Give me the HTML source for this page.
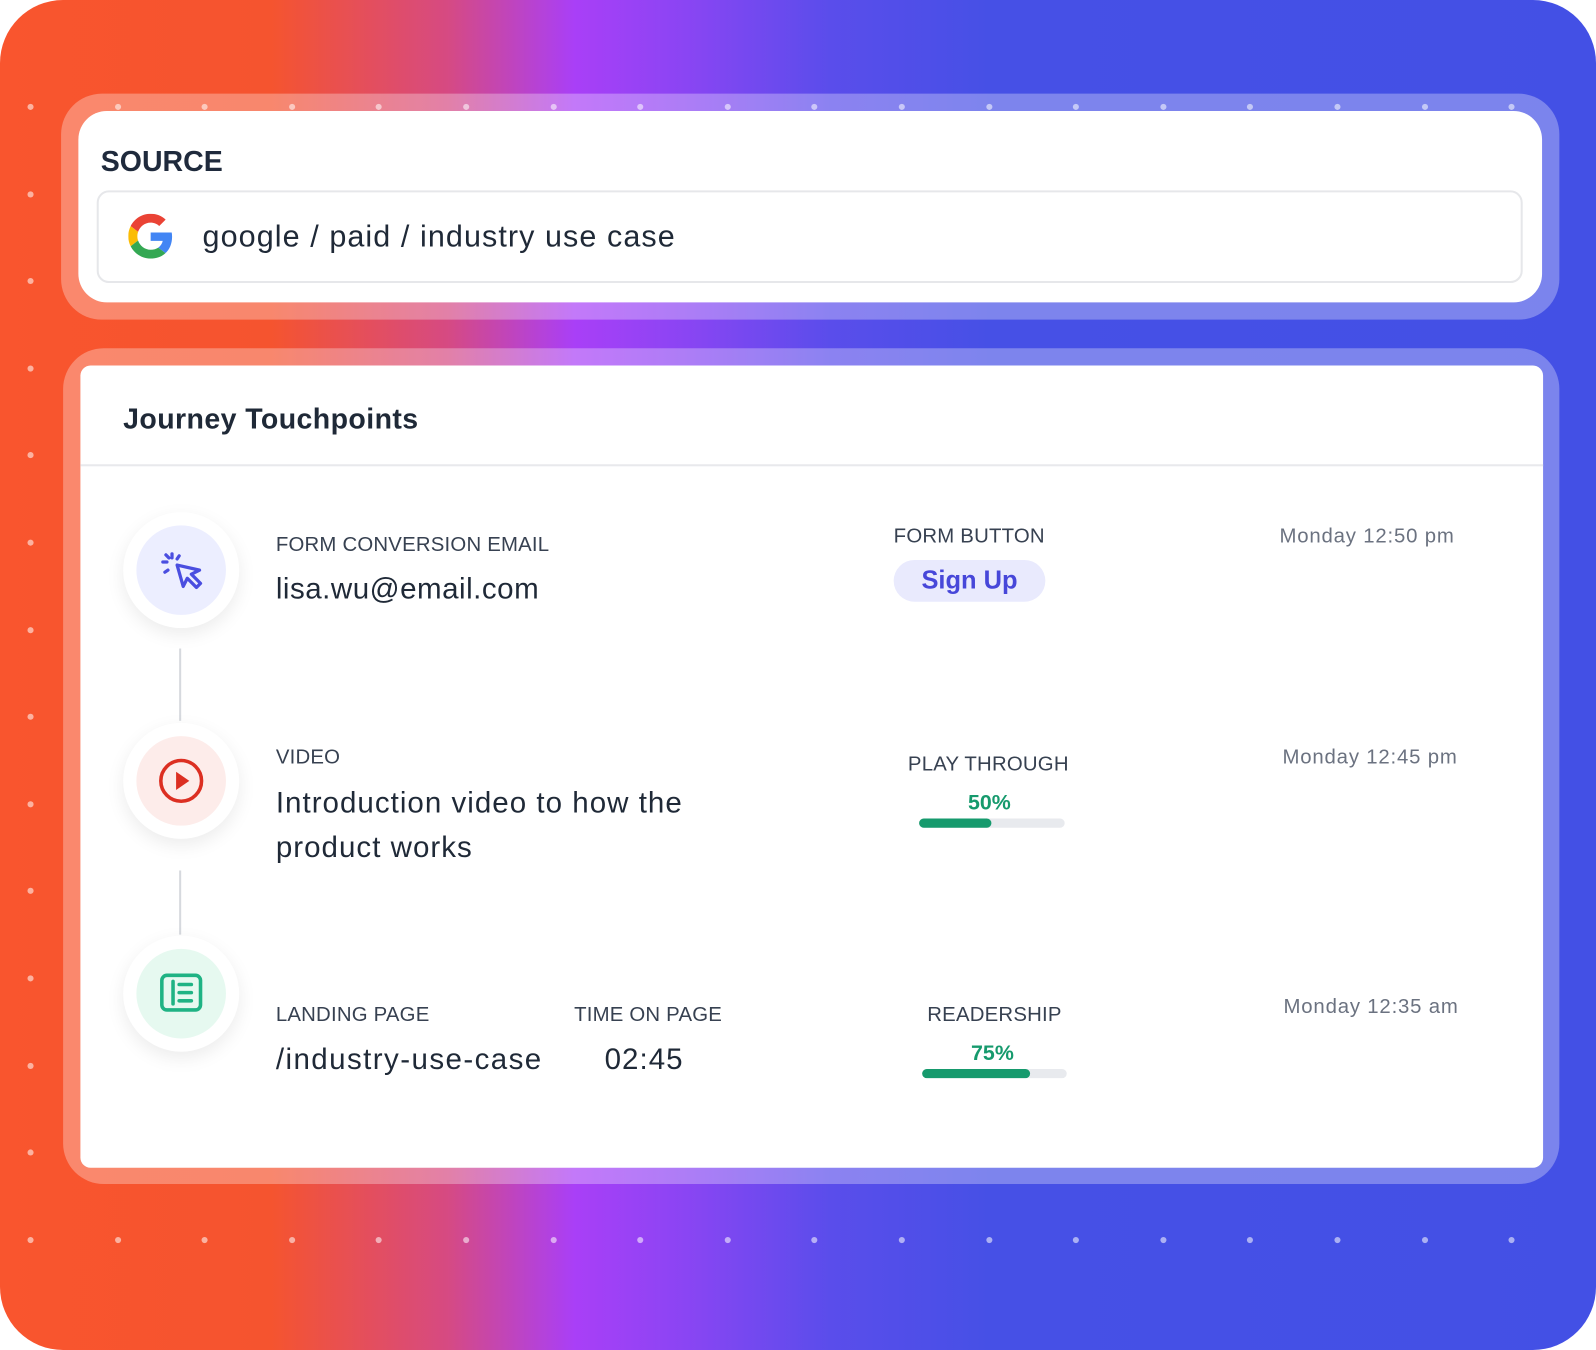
<!DOCTYPE html>
<html><head><meta charset="utf-8"><style>
html,body{margin:0;padding:0;width:1596px;height:1350px;overflow:hidden;background:#fff;font-family:"Liberation Sans",sans-serif;}
#w{position:absolute;left:0;top:0;width:1568px;height:1326px;transform:scale(1.01786,1.0181);transform-origin:0 0;}
.bg{position:absolute;left:0;top:0;width:1568px;height:1326px;border-radius:62px;background:linear-gradient(90deg,#f9552e 0%,#f5542f 17%,#d64a82 28%,#a93ff7 36%,#8a45f3 43%,#5a4deb 52%,#4650e6 62%,#4350e5 100%);overflow:hidden;}
.dot{position:absolute;width:6px;height:6px;border-radius:50%;background:rgba(255,255,255,.55);}
.frame{position:absolute;border-radius:40px;background:rgba(255,255,255,.3);}
.card{position:absolute;background:#fff;}
.abs{position:absolute;white-space:nowrap;color:#1f2937;}
.lab{font-size:20px;font-weight:500;color:#374151;letter-spacing:.2px;}
.val{font-size:29px;color:#1f2937;}
.time{font-size:20px;color:#6b7280;letter-spacing:.8px;}
.circ{position:absolute;width:114px;height:114px;border-radius:50%;background:#fff;box-shadow:0 6px 18px rgba(0,0,0,.08);}
.circ .in{position:absolute;left:13px;top:13px;width:88px;height:88px;border-radius:50%;}
.circ svg{position:absolute;left:13px;top:13px;}
.vl{position:absolute;left:176px;width:2px;background:#d6d9de;}
.bar{position:absolute;height:9px;border-radius:5px;background:#e8eaee;}
.bar i{position:absolute;left:0;top:0;height:9px;border-radius:5px;background:#169a6d;}
.pct{font-size:21px;font-weight:700;color:#169a6d;}
</style></head><body><div id="w">
<div class="bg">
<div id="dots"></div>
</div>
<div class="frame" style="left:60px;top:92px;width:1472px;height:222px;"></div>
<div class="card" style="left:77px;top:109px;width:1438px;height:188px;border-radius:28px;"></div>
<div class="abs" style="left:99px;top:143px;font-size:28px;font-weight:600;color:#1f2a3c;">SOURCE</div>
<div style="position:absolute;left:95px;top:187px;width:1397px;height:87px;border:2px solid #e6e7ea;border-radius:12px;"></div>
<svg style="position:absolute;left:126px;top:210px" width="44" height="44" viewBox="0 0 48 48">
<path fill="#EA4335" d="M24 9.5c3.540 0 6.710 1.220 9.210 3.600l6.850-6.850C35.9 2.380 30.470 0 24 0 14.620 0 6.510 5.380 2.560 13.220l7.980 6.190C12.430 13.720 17.740 9.500 24 9.500z"/>
<path fill="#4285F4" d="M46.98 24.55c0-1.57-.15-3.09-.38-4.55H24v9.02h12.94c-.58 2.96-2.26 5.48-4.78 7.18l7.73 6c4.51-4.18 7.090-10.360 7.090-17.650z"/>
<path fill="#FBBC05" d="M10.53 28.59c-.48-1.45-.76-2.99-.76-4.59s.27-3.14.76-4.59l-7.98-6.19C.92 16.46 0 20.12 0 24c0 3.88.92 7.54 2.56 10.78l7.97-6.19z"/>
<path fill="#34A853" d="M24 48c6.48 0 11.93-2.13 15.89-5.81l-7.73-6c-2.15 1.45-4.92 2.3-8.16 2.3-6.26 0-11.57-4.22-13.47-9.91l-7.98 6.19C6.51 42.62 14.62 48 24 48z"/>
</svg>
<div class="abs" style="left:199px;top:216px;font-size:30px;letter-spacing:1.05px;">google / paid / industry use case</div>

<div class="frame" style="left:62px;top:342px;width:1470px;height:821px;"></div>
<div class="card" style="left:79px;top:359px;width:1437px;height:788px;border-radius:10px;"></div>
<div class="abs" style="left:121px;top:396px;font-size:28px;font-weight:600;letter-spacing:.4px;">Journey Touchpoints</div>
<div style="position:absolute;left:79px;top:456px;width:1437px;height:2px;background:#e8e9ec;"></div>

<div class="vl" style="top:637px;height:71px"></div>
<div class="vl" style="top:855px;height:63px"></div>

<div class="circ" style="left:121px;top:503px"><div class="in" style="background:#eceeff"></div>
<svg width="88" height="88" viewBox="0 0 88 88" fill="none" stroke="#4a4ee0" stroke-width="3.2" stroke-linecap="round" stroke-linejoin="round">
<path d="M40 39l6 21 4-8 9 9 4-4-9-9 8-4z"/>
<path d="M35 28v4M26 36h4M28 46l3-2M42 30l-2 3M29 29l3 3"/></svg></div>
<div class="circ" style="left:121px;top:710px"><div class="in" style="background:#fdecea"></div>
<svg width="88" height="88" viewBox="0 0 88 88"><circle cx="44" cy="44" r="20" fill="none" stroke="#dc2f22" stroke-width="3.5"/><path d="M39 35v18l13-9z" fill="#dc2f22"/></svg></div>
<div class="circ" style="left:121px;top:919px"><div class="in" style="background:#e6f9f0"></div>
<svg width="88" height="88" viewBox="0 0 88 88" fill="none" stroke="#1fb384" stroke-width="3.5" stroke-linecap="round"><rect x="25" y="26" width="38" height="34" rx="5"/><path d="M36 32v22M42 35h12M42 43h12M42 51h12"/></svg></div>

<div class="abs lab" style="left:271px;top:524px">FORM CONVERSION EMAIL</div>
<div class="abs val" style="left:271px;top:563px;letter-spacing:.5px">lisa.wu@email.com</div>
<div class="abs lab" style="left:878px;top:516px">FORM BUTTON</div>
<div style="position:absolute;left:878px;top:550px;width:149px;height:41px;border-radius:21px;background:#e9eafd;"></div>
<div class="abs" style="left:878px;top:556px;width:149px;text-align:center;font-size:25px;font-weight:600;color:#4747d9;">Sign Up</div>
<div class="abs time" style="left:1257px;top:516px">Monday 12:50 pm</div>

<div class="abs lab" style="left:271px;top:733px">VIDEO</div>
<div class="abs val" style="left:271px;top:767px;line-height:44px;letter-spacing:1px">Introduction video to how the<br>product works</div>
<div class="abs lab" style="left:892px;top:740px">PLAY THROUGH</div>
<div class="abs pct" style="left:951px;top:777px">50%</div>
<div class="bar" style="left:903px;top:804px;width:143px"><i style="width:71px"></i></div>
<div class="abs time" style="left:1260px;top:733px">Monday 12:45 pm</div>

<div class="abs lab" style="left:271px;top:986px">LANDING PAGE</div>
<div class="abs val" style="left:271px;top:1025px;letter-spacing:1.4px">/industry-use-case</div>
<div class="abs lab" style="left:564px;top:986px">TIME ON PAGE</div>
<div class="abs val" style="left:594px;top:1025px;letter-spacing:1px">02:45</div>
<div class="abs lab" style="left:911px;top:986px">READERSHIP</div>
<div class="abs pct" style="left:954px;top:1023px">75%</div>
<div class="bar" style="left:906px;top:1050px;width:142px"><i style="width:106px"></i></div>
<div class="abs time" style="left:1261px;top:978px">Monday 12:35 am</div>
</div>
<script>
var d=document.getElementById('dots'),h='';
for(var y=105;y<1220;y+=85.6){h+='<div class="dot" style="left:27px;top:'+(y-3)+'px"></div>';}
for(var x=115.6;x<1500;x+=85.6){h+='<div class="dot" style="left:'+(x-3)+'px;top:102px"></div><div class="dot" style="left:'+(x-3)+'px;top:1215px"></div>';}
d.innerHTML=h;
</script>
</body></html>
